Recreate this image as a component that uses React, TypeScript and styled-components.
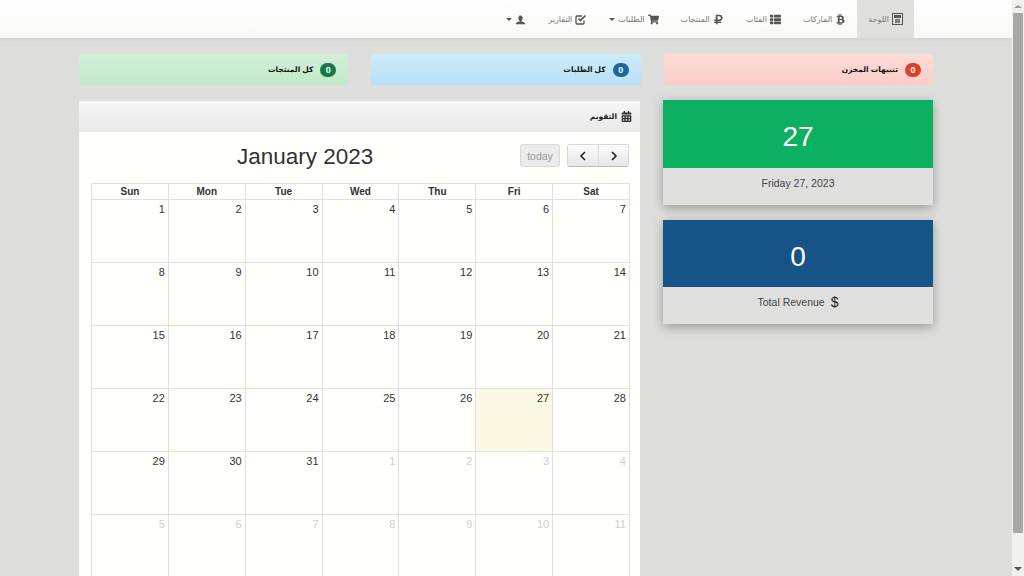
import React from 'react';
import styled, { createGlobalStyle } from 'styled-components';
import { FaBtc, FaThList, FaRubleSign, FaShoppingCart, FaCalendarAlt } from 'react-icons/fa';
import { ImUser } from 'react-icons/im';

const GlobalStyle = createGlobalStyle`
  html, body {
    margin: 0;
    padding: 0;
    height: 576px;
    overflow: hidden;
    background: #dddddc;
    font-family: "Liberation Sans", "DejaVu Sans", sans-serif;
    color: #333;
  }
  * { box-sizing: border-box; }
`;

const Shell = styled.div`
  display: flex;
  height: 576px;
  overflow: hidden;
`;

const Page = styled.div`
  flex: 1;
  min-width: 0;
  overflow: hidden;
`;

const ScrollTrack = styled.div`
  width: 12px;
  background: #f0f0ec;
  display: flex;
  flex-direction: column;
  align-items: center;
  padding: 5px 0;
`;

const ScrollThumb = styled.div`
  width: 10px;
  height: 520px;
  margin-top: 5px;
  background: #a8a8a6;
  flex: none;
`;

const Arrow = styled.div<{ $down?: boolean }>`
  width: 0;
  height: 0;
  flex: none;
  border-left: 4px solid transparent;
  border-right: 4px solid transparent;
  ${p => (p.$down ? 'margin-top: auto; border-top: 4px solid #505050;' : 'border-bottom: 3px solid #9a9a9a;')}
`;

const NavBar = styled.nav`
  height: 39px;
  display: flex;
  direction: rtl;
  padding-right: 98px;
  background: linear-gradient(to bottom, #ffffff, #f8f8f6);
  border-bottom: 1px solid #d6d6d6;
  box-shadow: 0 1px 2px rgba(0, 0, 0, 0.06);
`;

const NavItem = styled.a<{ $active?: boolean }>`
  display: flex;
  align-items: center;
  gap: 3px;
  padding: 0 11px;
  font-size: 8px;
  color: #777;
  background: ${p => (p.$active ? '#dfdfdd' : 'transparent')};
  svg {
    color: #555;
    font-size: 11px;
    flex: none;
  }
`;

const Caret = styled.span`
  width: 0;
  height: 0;
  border-left: 3px solid transparent;
  border-right: 3px solid transparent;
  border-top: 3px solid #555;
`;

const Content = styled.main`
  width: 854px;
  margin: 15px 0 0 79px;
  direction: rtl;
`;

const AlertRow = styled.div`
  display: grid;
  grid-template-columns: repeat(3, 1fr);
  gap: 23px;
  margin-bottom: 16px;
`;

const tones = {
  red: { from: '#fddcd7', to: '#fbcdc8', badge: '#d8412a' },
  blue: { from: '#cdebfa', to: '#b7e0f6', badge: '#1c659c' },
  green: { from: '#d1efd6', to: '#c1e9c8', badge: '#147a48' },
};
type Tone = keyof typeof tones;

const AlertBox = styled.div<{ $tone: Tone }>`
  height: 31px;
  display: flex;
  align-items: center;
  gap: 7px;
  padding: 0 12px;
  border-radius: 2px;
  background: linear-gradient(to bottom, ${p => tones[p.$tone].from}, ${p => tones[p.$tone].to});
  font-size: 7.5px;
  font-weight: bold;
  color: #111;
`;

const Badge = styled.span<{ $tone: Tone }>`
  min-width: 16px;
  height: 14px;
  border-radius: 7px;
  background: ${p => tones[p.$tone].badge};
  color: #fff;
  font-size: 9px;
  font-weight: bold;
  display: flex;
  align-items: center;
  justify-content: center;
`;

const Columns = styled.div`
  display: flex;
  gap: 23px;
  align-items: flex-start;
`;

const SideColumn = styled.aside`
  width: 270px;
  flex: none;
  display: flex;
  flex-direction: column;
  gap: 15px;
  margin-top: -1px;
`;

const StatCard = styled.section`
  box-shadow: 0 3px 10px rgba(0, 0, 0, 0.3);
  background: #dfdfde;
`;

const StatNumber = styled.div<{ $bg: string; $tall?: boolean }>`
  height: ${p => (p.$tall ? 68 : 67)}px;
  padding-top: 6px;
  background: ${p => p.$bg};
  color: #fff;
  font-size: 28px;
  display: flex;
  align-items: center;
  justify-content: center;
`;

const StatLabel = styled.div`
  height: 37px;
  direction: ltr;
  font-size: 10.5px;
  color: #444;
  display: flex;
  align-items: center;
  justify-content: center;
  gap: 6px;
  padding-bottom: 8px;
`;

const Currency = styled.span`
  font-size: 14px;
  color: #222;
`;

const CalendarPanel = styled.section`
  width: 561px;
  flex: none;
  background: #fffffc;
`;

const PanelHead = styled.header`
  height: 31px;
  display: flex;
  align-items: center;
  gap: 4px;
  padding: 0 8px;
  background: linear-gradient(to bottom, #f6f6f6, #e9e9e9);
  font-size: 7.5px;
  font-weight: bold;
  color: #222;
  svg {
    font-size: 11px;
    color: #333;
  }
`;

const PanelBody = styled.div`
  direction: ltr;
  padding: 11px 10px 0 12px;
`;

const CalToolbar = styled.div`
  height: 40px;
  display: flex;
  align-items: flex-start;
  gap: 7px;
  padding-right: 1px;
`;

const CalTitle = styled.h2`
  margin: 0 auto 0 146px;
  font-size: 22.5px;
  line-height: 27px;
  font-weight: normal;
  color: #333;
`;

const TodayButton = styled.div`
  height: 23px;
  width: 40px;
  border: 1px solid #dcdcdc;
  border-radius: 3px;
  background: #ebebeb;
  color: #999;
  font-size: 10.5px;
  display: flex;
  align-items: center;
  justify-content: center;
  margin-top: 1px;
`;

const ButtonGroup = styled.div`
  display: flex;
  height: 23px;
  margin-top: 1px;
  border: 1px solid #d8d8d8;
  border-bottom-color: #b9b9b9;
  border-radius: 3px;
  overflow: hidden;
`;

const ArrowButton = styled.div`
  width: 30px;
  display: flex;
  align-items: center;
  justify-content: center;
  background: linear-gradient(to bottom, #fbfbfb, #e7e7e7);
  & + & {
    border-left: 1px solid #dcdcdc;
  }
`;

const Grid = styled.div`
  display: grid;
  grid-template-columns: repeat(7, 1fr);
  width: 539px;
  border-left: 1px solid #e0e0e0;
`;

const DayHead = styled.div`
  height: 17px;
  border: 1px solid #e0e0e0;
  border-left: 0;
  font-size: 10px;
  font-weight: bold;
  line-height: 15px;
  text-align: center;
  color: #333;
`;

const DayCell = styled.div<{ $muted?: boolean; $today?: boolean }>`
  height: 63px;
  border-right: 1px solid #e0e0e0;
  border-bottom: 1px solid #e0e0e0;
  padding: 3px 3px 0 0;
  text-align: right;
  font-size: 11px;
  line-height: 13px;
  color: ${p => (p.$muted ? '#cfcfcf' : '#333')};
  background: ${p => (p.$today ? '#fbf8e3' : 'transparent')};
`;

const weekDays = ['Sun', 'Mon', 'Tue', 'Wed', 'Thu', 'Fri', 'Sat'];

const days = [
  ...Array.from({ length: 31 }, (_, i) => ({ n: i + 1, muted: false })),
  ...Array.from({ length: 11 }, (_, i) => ({ n: i + 1, muted: true })),
];

// glyph used for the dashboard link
const DashboardIcon = () => (
  <svg width="11" height="12" viewBox="0 0 11 12">
    <rect x="0.5" y="0.5" width="10" height="11" fill="none" stroke="currentColor" />
    <rect x="2" y="2" width="7" height="3" fill="currentColor" />
    <rect x="3" y="6" width="5" height="4" fill="currentColor" opacity="0.7" />
  </svg>
);

// square with a tick running out of its top right corner
const ReportsIcon = () => (
  <svg width="12" height="11" viewBox="0 0 12 11">
    <path d="M9 6.5 V9 a1 1 0 0 1 -1 1 H2 a1 1 0 0 1 -1 -1 V3 a1 1 0 0 1 1 -1 H7" fill="none" stroke="currentColor" strokeWidth="1.3" />
    <path d="M3.5 4.5 L5.5 6.5 L10.5 1.5" fill="none" stroke="currentColor" strokeWidth="1.7" />
  </svg>
);

const Chevron = ({ left }: { left?: boolean }) => (
  <svg width="8" height="10" viewBox="0 0 8 10">
    <path d={left ? 'M6 1 L2 5 L6 9' : 'M2 1 L6 5 L2 9'} fill="none" stroke="#222" strokeWidth="1.6" />
  </svg>
);

const App = () => {
  return (
    <>
      <GlobalStyle />
      <Shell>
        <Page>
          <NavBar>
            <NavItem $active><DashboardIcon /> اللوحة</NavItem>
            <NavItem><FaBtc /> الماركات</NavItem>
            <NavItem><FaThList /> الفئات</NavItem>
            <NavItem><FaRubleSign /> المنتجات</NavItem>
            <NavItem><FaShoppingCart /> الطلبات <Caret /></NavItem>
            <NavItem><ReportsIcon /> التقارير</NavItem>
            <NavItem><ImUser /> <Caret /></NavItem>
          </NavBar>
          <Content>
            <AlertRow>
              <AlertBox $tone="red"><Badge $tone="red">0</Badge> تنبيهات المخزن</AlertBox>
              <AlertBox $tone="blue"><Badge $tone="blue">0</Badge> كل الطلبات</AlertBox>
              <AlertBox $tone="green"><Badge $tone="green">0</Badge> كل المنتجات</AlertBox>
            </AlertRow>
            <Columns>
              <SideColumn>
                <StatCard>
                  <StatNumber $bg="#0daf60" $tall>27</StatNumber>
                  <StatLabel>Friday 27, 2023</StatLabel>
                </StatCard>
                <StatCard>
                  <StatNumber $bg="#165487">0</StatNumber>
                  <StatLabel>Total Revenue <Currency>$</Currency></StatLabel>
                </StatCard>
              </SideColumn>
              <CalendarPanel>
                <PanelHead><FaCalendarAlt /> التقويم</PanelHead>
                <PanelBody>
                  <CalToolbar>
                    <CalTitle>January 2023</CalTitle>
                    <TodayButton>today</TodayButton>
                    <ButtonGroup>
                      <ArrowButton><Chevron left /></ArrowButton>
                      <ArrowButton><Chevron /></ArrowButton>
                    </ButtonGroup>
                  </CalToolbar>
                  <Grid>
                    {weekDays.map(d => <DayHead key={d}>{d}</DayHead>)}
                    {days.map((d, i) => (
                      <DayCell key={i} $muted={d.muted} $today={!d.muted && d.n === 27}>{d.n}</DayCell>
                    ))}
                  </Grid>
                </PanelBody>
              </CalendarPanel>
            </Columns>
          </Content>
        </Page>
        <ScrollTrack>
          <Arrow />
          <ScrollThumb />
          <Arrow $down />
        </ScrollTrack>
      </Shell>
    </>
  );
};

export default App;
